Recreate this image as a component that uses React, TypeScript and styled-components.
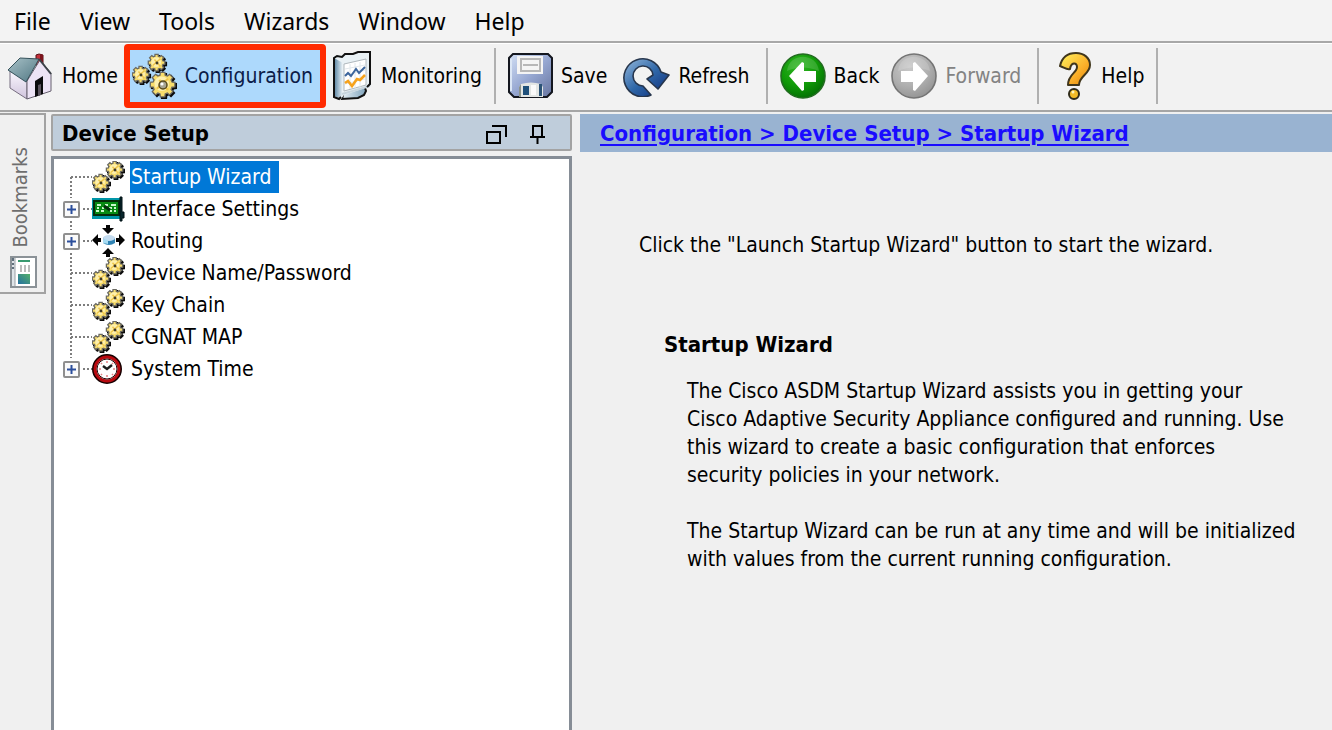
import React from "react";
import styled, { createGlobalStyle } from "styled-components";

const GlobalStyle = createGlobalStyle`
  *, *::before, *::after { box-sizing: border-box; }
  body {
    margin: 0;
    background: #f0f0f0;
    color: #000;
    font-family: "DejaVu Sans Condensed", Tahoma, sans-serif;
    font-size: 21px;
  }
  button { font: inherit; color: inherit; background: none; border: 0; padding: 0; cursor: default; }
  svg { display: block; flex: none; }
`;

const Page = styled.div`
  min-height: 100vh;
  display: flex;
  flex-direction: column;
`;

/* ---------- menu ---------- */

const MenuBar = styled.nav`
  display: flex;
  gap: 29px;
  height: 43px;
  padding: 0 14px;
  background: #f3f3f3;
  border-bottom: 2px solid #a8a8a8;
`;

const MenuItem = styled.button`
  font-family: "Noto Sans", "Segoe UI", sans-serif;
  font-size: 23px;
  line-height: 40px;
`;

/* ---------- toolbar ---------- */

const Toolbar = styled.div`
  display: flex;
  align-items: center;
  height: 69px;
  padding-bottom: 2px;
  background: #f2f2f2;
  border-top: 1px solid #fff;
  border-bottom: 2px solid #a5a5a5;
`;

const ToolButton = styled.button<{ $active?: boolean; $before?: number; $after?: number }>`
  display: flex;
  align-items: center;
  gap: 8px;
  height: 64px;
  padding: 0 ${(p) => p.$after ?? 6}px 0 ${(p) => p.$before ?? 6}px;
  line-height: 28px;
  white-space: nowrap;
  ${(p) =>
    p.$active &&
    `
    padding: 0 7px 0 2px;
    color: #0c1c48;
    background: #add9fc;
    border: 6px solid #ff2a00;
    border-radius: 4px;
  `}
  &:disabled { color: #838383; }
`;

const Separator = styled.div`
  width: 2px;
  height: 56px;
  margin: 0 6px;
  background: #b0b0b0;
`;

/* ---------- body ---------- */

const Body = styled.div`
  flex: 1;
  display: flex;
`;

const Rail = styled.aside`
  width: 51px;
  flex: none;
  padding-top: 1px;
`;

const BookmarksTab = styled.button`
  display: flex;
  flex-direction: column;
  align-items: flex-start;
  justify-content: flex-end;
  gap: 8px;
  width: 46px;
  height: 181px;
  padding: 0 0 4px 10px;
  border: 2px solid #a3a3a3;
  border-left: 0;
  background: #f0f0f0;
  color: #6e6e6e;
`;

const VerticalLabel = styled.span`
  writing-mode: vertical-rl;
  transform: rotate(180deg);
  font-size: 20px;
  line-height: 20px;
`;

const Sidebar = styled.section`
  width: 521px;
  flex: none;
  display: flex;
  flex-direction: column;
  gap: 5px;
  padding-top: 2px;
`;

const SidebarHeader = styled.header`
  display: flex;
  align-items: center;
  height: 37px;
  padding: 3px 25px 0 9px;
  background: #bfcddb;
  border: 2px solid #a3a3a3;
  border-radius: 2px;
`;

const SidebarTitle = styled.h2`
  flex: 1;
  margin: 0;
  font-size: 22px;
  line-height: 32px;
  font-weight: 700;
`;

const HeaderActions = styled.div`
  display: flex;
  gap: 23px;
`;

const Tree = styled.ul`
  flex: 1;
  margin: 0;
  padding: 2px 0 0 4px;
  list-style: none;
  background: #fff;
  border: 3px solid #868d96;
  border-bottom: 0;
`;

const TreeRow = styled.li`
  display: flex;
  align-items: center;
  height: 32px;
`;

const Branch = styled.span`
  width: 34px;
  height: 32px;
`;

const TreeIcon = styled.span`
  width: 38px;
`;

const TreeLabel = styled.button<{ $selected?: boolean }>`
  height: 32px;
  padding: 0 8px 0 1px;
  line-height: 32px;
  white-space: nowrap;
  ${(p) => p.$selected && `color: #fff; background: #0078d7;`}
`;

const Main = styled.main`
  flex: 1;
  min-width: 0;
  padding: 2px 0 0 8px;
`;

const Crumbs = styled.div`
  height: 38px;
  padding-left: 20px;
  background: #99b3d1;
  font-size: 22px;
  font-weight: 700;
  line-height: 40px;
`;

const CrumbLink = styled.a`
  color: #1a0cff;
  text-decoration: underline;
  text-decoration-thickness: 2px;
  text-underline-offset: 3px;
`;

const Lead = styled.p`
  margin: 79px 0 0 59px;
  line-height: 28px;
`;

const Article = styled.article`
  margin: 72px 0 0;
  padding: 0 16px 0 84px;
`;

const ArticleTitle = styled.h1`
  margin: 0 0 18px;
  font-size: 22px;
  line-height: 28px;
`;

const Paragraph = styled.p`
  margin: 0 0 28px 23px;
  line-height: 28px;
`;

/* ---------- icons ---------- */

const HomeIcon = () => (
  <svg width="46" height="48" viewBox="0 0 46 48" aria-hidden="true">
    <defs>
      <linearGradient id="wall" x1="0" y1="0" x2="0" y2="1">
        <stop offset="0" stopColor="#fbf8ff" />
        <stop offset="1" stopColor="#cfc3dc" />
      </linearGradient>
      <linearGradient id="roof" x1="0" y1="0" x2="1" y2="1">
        <stop offset="0" stopColor="#a9c2c8" />
        <stop offset="1" stopColor="#4f7682" />
      </linearGradient>
    </defs>
    <path d="M28 3l3-1 4 1v14l-7-4z" fill="#c4303a" stroke="#571016" />
    <path d="M32 2v12l3 3V3z" fill="#7d141c" />
    <path d="M2 19v17l17 11V28z" fill="url(#wall)" stroke="#776e80" />
    <path d="M19 47l24-8V21L32 8 19 29z" fill="#ece3f5" stroke="#66606e" />
    <path d="M27 29l8-5v18l-8 3z" fill="#0b0b0d" />
    <path d="M30 33l3-1v11l-3 1z" fill="#5b545f" />
    <path d="M0 18L12 6l19 1-13 23z" fill="url(#roof)" stroke="#35525b" />
    <path d="M31 7l12 15" stroke="#3c4248" strokeWidth="2" />
  </svg>
);

type GearProps = { cx: number; cy: number; r: number; teeth?: number };

const Gear = ({ cx, cy, r, teeth = 8 }: GearProps) => {
  const outline = (offset: number) => {
    const points: string[] = [];
    for (let i = 0; i < teeth; i++) {
      const step = (Math.PI * 2) / teeth;
      [
        [-0.34, r * 0.78],
        [-0.24, r],
        [0.24, r],
        [0.34, r * 0.78],
      ].forEach(([t, d]) => {
        const a = i * step + t * step;
        points.push(`${(cx + offset + Math.cos(a) * d).toFixed(1)},${(cy + offset + Math.sin(a) * d).toFixed(1)}`);
      });
    }
    return points.join(" ");
  };
  return (
    <g>
      <polygon points={outline(1)} fill="#0c0c0c" stroke="#0c0c0c" strokeWidth="1.6" />
      <polygon points={outline(-0.4)} fill="#f8dd6c" stroke="#6b6a62" strokeWidth="1.3" />
      <circle cx={cx - r * 0.1} cy={cy - r * 0.1} r={r * 0.58} fill="#fdf0ae" />
      <path
        d={`M${cx - r * 0.5} ${cy + r * 0.3}L${cx + r * 0.4} ${cy - r * 0.5}M${cx - r * 0.3} ${cy - r * 0.4}L${cx + r * 0.4} ${cy + r * 0.4}`}
        stroke="#f0c64a"
        strokeWidth={r * 0.18}
      />
      <circle cx={cx} cy={cy} r={r * 0.17} fill="#3f3a2a" />
    </g>
  );
};

const ConfigurationIcon = () => (
  <svg width="45" height="46" viewBox="0 0 45 46" aria-hidden="true">
    <Gear cx={25} cy={10} r={8.5} />
    <Gear cx={9} cy={22} r={8.5} />
    <Gear cx={31} cy={32} r={12.5} />
    <circle cx="31" cy="32" r="4" fill="#a8a594" stroke="#5a4a1c" strokeWidth="1.5" />
    <circle cx="30" cy="31" r="1.6" fill="#fff" />
  </svg>
);

const GearsIcon = () => (
  <svg width="33" height="32" viewBox="0 0 33 32" aria-hidden="true">
    <Gear cx={23} cy={9} r={8.3} />
    <Gear cx={9} cy={22} r={8.3} />
  </svg>
);

const MonitoringIcon = () => (
  <svg width="41" height="50" viewBox="0 0 41 50" aria-hidden="true">
    <defs>
      <linearGradient id="side" x1="0" y1="0" x2="1" y2="0">
        <stop offset="0" stopColor="#54809f" />
        <stop offset="1" stopColor="#f2f8fb" />
      </linearGradient>
      <linearGradient id="stand" x1="0" y1="0" x2="1" y2="0">
        <stop offset="0" stopColor="#e6f0f6" />
        <stop offset="1" stopColor="#7fa3bb" />
      </linearGradient>
    </defs>
    <path d="M12 40l20-6 2 6-2 4-6 3-16 1z" fill="url(#stand)" stroke="#111" strokeWidth="2" />
    <path d="M1 5l11-1 3-2 10 0 4-1h10v34l-27 9-3 4-8-2z" fill="#e9f1f5" />
    <path d="M2 7l9 5v31l-3 4-6-2z" fill="url(#side)" />
    <path d="M10 43l28-8" stroke="#c7d5de" strokeWidth="2" />
    <path
      d="M9 46l-2 2-5-2V7l3-2 5 1 3-3 8 0 5-2h12v32l-3 3"
      fill="none"
      stroke="#111"
      strokeWidth="2"
    />
    <path d="M12 13l22-5v26l-22 6z" fill="#fff" stroke="#b0b8bd" />
    <path d="M13 18l20-4M13 24l20-5M13 33l20-5M18 13v25M23 12v25M28 11v25" stroke="#e2e8ec" />
    <path d="M13 25l3-3 3 3 5-7 3 4 6-6" fill="none" stroke="#3c659c" strokeWidth="2" />
    <path d="M13 32l3-2 4 5 5-7 3 1 5-5" fill="none" stroke="#f6a21c" strokeWidth="2.6" />
  </svg>
);

const SaveIcon = () => (
  <svg width="45" height="46" viewBox="0 0 45 46" aria-hidden="true">
    <defs>
      <linearGradient id="disk" x1="0" y1="0" x2="1" y2="1">
        <stop offset="0" stopColor="#d3e0f5" />
        <stop offset="0.5" stopColor="#97a8d2" />
        <stop offset="1" stopColor="#66749f" />
      </linearGradient>
    </defs>
    <path d="M5 1h35l4 4v34l-5 5H6l-5-5V5z" fill="url(#disk)" stroke="#14171f" strokeWidth="2" />
    <path d="M3 6v32" stroke="#dbe6f5" strokeWidth="2" />
    <path d="M9 3h26v18H9z" fill="#f4f4f4" />
    <path d="M13 6h19v12H13zM15 12h15" fill="none" stroke="#b7b7b7" strokeWidth="2" />
    <path d="M13 31q10-3 20 0l2 3v10H11V34z" fill="#e3e6e4" />
    <path d="M11 34l2-3v13h-2z" fill="#8b938d" />
    <path d="M15 33h6v9h-6z" fill="#1f507a" />
    <path d="M31 31h3v12h-3z" fill="#2b5376" />
    <path d="M23 32h5v10h-5z" fill="#fafafa" />
  </svg>
);

const RefreshIcon = () => (
  <svg width="47" height="42" viewBox="0 0 47 42" aria-hidden="true">
    <defs>
      <linearGradient id="swirl" x1="0" y1="0" x2="1" y2="1">
        <stop offset="0" stopColor="#94b8dc" />
        <stop offset="0.5" stopColor="#2f67a8" />
        <stop offset="1" stopColor="#0a2878" />
      </linearGradient>
    </defs>
    <path
      d="M28 40A19 19 0 1 1 38 17L46 20 35 34 24 24 30 20A10 10 0 1 0 20 31z"
      fill="url(#swirl)"
      stroke="#27364d"
      strokeWidth="1.6"
      strokeLinejoin="round"
    />
  </svg>
);

const ArrowIcon = ({ enabled }: { enabled: boolean }) => {
  const id = enabled ? "back" : "forward";
  return (
    <svg width="46" height="48" viewBox="0 0 46 48" aria-hidden="true">
      <defs>
        <radialGradient id={id} cx="0.4" cy="0.3" r="0.7">
          <stop offset="0" stopColor={enabled ? "#2fb522" : "#c9c9c9"} />
          <stop offset="0.6" stopColor={enabled ? "#109a08" : "#b0b0b0"} />
          <stop offset="1" stopColor={enabled ? "#047304" : "#969696"} />
        </radialGradient>
      </defs>
      <circle cx="23" cy="24" r="22" fill={`url(#${id})`} stroke={enabled ? "#226c20" : "#747474"} strokeWidth="1.6" />
      <path d="M7 19C9 0 37 0 39 19Q22 12 7 19z" fill="#fff" opacity="0.15" />
      <path
        d={enabled ? "M9 24L22 10l2 1v8h12v11H24v8l-2 1z" : "M37 24L24 10l-2 1v8H10v11h12v8l2 1z"}
        fill="#fff"
      />
    </svg>
  );
};

const HelpIcon = () => (
  <svg width="34" height="49" viewBox="0 0 34 49" aria-hidden="true">
    <defs>
      <linearGradient id="question" x1="0" y1="0" x2="1" y2="1">
        <stop offset="0" stopColor="#fff45e" />
        <stop offset="0.6" stopColor="#fbb02a" />
        <stop offset="1" stopColor="#e08408" />
      </linearGradient>
    </defs>
    <path
      d="M1 14C3 5 9 1 17 1s14 5 14 12c0 9-11 11-11 20H9c0-11 9-12 9-18 0-5-6-5-7 2-3 1-5-1-10-3z"
      fill="url(#question)"
      stroke="#40361c"
      strokeWidth="2"
      strokeLinejoin="round"
    />
    <circle cx="15" cy="42" r="5" fill="#f3bb26" stroke="#2f2a18" strokeWidth="2" />
    <circle cx="14" cy="40" r="1.5" fill="#fff6b8" />
  </svg>
);

const InterfaceIcon = () => (
  <svg width="33" height="26" viewBox="0 0 33 26" aria-hidden="true">
    <path d="M0 2h28v21H0z" fill="#0096a8" />
    <path d="M2 5h25v14H2z" fill="#078a12" stroke="#052d0a" strokeWidth="2" />
    <path d="M28 1h2v15h2v6h-2v3h-2z" fill="#08262c" stroke="#001015" />
    <path d="M5 9h4M13 9h3M19 9h5M5 12h2M10 12h2M17 12h3M22 12h2M4 15h3M9 15h3M18 15h2M22 15h2" stroke="#c9f7cb" strokeWidth="2" />
    <path d="M12 10l6 4" stroke="#032f0b" strokeWidth="3" />
  </svg>
);

const RoutingIcon = () => (
  <svg width="33" height="32" viewBox="0 0 33 32" aria-hidden="true">
    <path d="M0 15l6-6v4h3v4H6v4zM33 15l-6-6v4h-3v4h3v4zM10 3h4V0h4v3h4l-6 6zM10 29h4v3h4v-3h4l-6-6z" fill="#050505" />
    <path d="M11 13q5-4 12 0v5q-6 4-12 0z" fill="#2e83b4" />
    <ellipse cx="17" cy="13" rx="6" ry="3" fill="#c4dcf0" />
    <path d="M11 14v4l5 1v-4z" fill="#a8dcf2" />
  </svg>
);

const ClockIcon = () => (
  <svg width="30" height="30" viewBox="0 0 30 30" aria-hidden="true">
    <circle cx="15" cy="15" r="13" fill="#fff" stroke="#150000" strokeWidth="4" />
    <circle cx="15" cy="15" r="12" fill="none" stroke="#b80a10" strokeWidth="3" />
    <circle cx="15" cy="15" r="10" fill="#fff" stroke="#200506" strokeWidth="1" />
    <path d="M15 7v2M15 21v2M7 15h2M21 15h2M9 9l1 1M20 20l1 1M9 21l1-1M20 10l1-1" stroke="#e58589" strokeWidth="1.6" />
    <path d="M11 12l4 3 5-4" fill="none" stroke="#1c1c1c" strokeWidth="2.4" />
  </svg>
);

const BookmarkPageIcon = () => (
  <svg width="27" height="32" viewBox="0 0 27 32" aria-hidden="true">
    <defs>
      <linearGradient id="thumb" x1="1" y1="0" x2="0" y2="1">
        <stop offset="0" stopColor="#55b06a" />
        <stop offset="1" stopColor="#2470a0" />
      </linearGradient>
    </defs>
    <path d="M1 1h25v30H1z" fill="#fff" stroke="#8b9297" strokeWidth="2" />
    <path d="M2 2h3v28H2z" fill="#dfe4e8" />
    <path d="M3 2v3M3 7v2M3 11v2" stroke="#60707c" strokeWidth="2" />
    <path d="M5 2v28" stroke="#9aa1a6" />
    <path d="M8 5h12" stroke="#3a9a70" strokeWidth="2" />
    <path d="M11 9v7M15 9v7M19 9v7" stroke="#bcbcbc" strokeWidth="2" />
    <path d="M8 18h12v10H8z" fill="url(#thumb)" />
  </svg>
);

const FloatIcon = () => (
  <svg width="21" height="19" viewBox="0 0 21 19" aria-hidden="true">
    <path d="M1 7h13v11H1zM6 1h14v11" fill="none" stroke="#000" strokeWidth="2" />
  </svg>
);

const PinIcon = () => (
  <svg width="15" height="19" viewBox="0 0 15 19" aria-hidden="true">
    <path d="M3 12V1h9v11M0 12h15M7.5 12v7" fill="none" stroke="#000" strokeWidth="2" />
  </svg>
);

type BranchProps = { expandable?: boolean; first?: boolean; last?: boolean };

const BranchLines = ({ expandable, first, last }: BranchProps) => (
  <svg width="37" height="32" viewBox="0 0 37 32" aria-hidden="true">
    <path
      d={`M13 ${first ? 16 : 0}V${last ? 16 : 32}M13 16H34`}
      fill="none"
      stroke="#7d7d7d"
      strokeWidth="2"
      strokeDasharray="2 2"
    />
    {expandable && (
      <>
        <path d="M3 5h20v22H3z" fill="#fff" />
        <rect x="6" y="9" width="15" height="15" rx="1" fill="#fafafa" stroke="#8f8f8f" strokeWidth="2" />
        <path d="M9 16.5h9M13.5 12v9" stroke="#2c4f9c" strokeWidth="2" />
      </>
    )}
  </svg>
);

/* ---------- data ---------- */

const menus = ["File", "View", "Tools", "Wizards", "Window", "Help"];

const nodes = [
  { label: "Startup Wizard", icon: <GearsIcon />, selected: true },
  { label: "Interface Settings", icon: <InterfaceIcon />, expandable: true },
  { label: "Routing", icon: <RoutingIcon />, expandable: true },
  { label: "Device Name/Password", icon: <GearsIcon /> },
  { label: "Key Chain", icon: <GearsIcon /> },
  { label: "CGNAT MAP", icon: <GearsIcon /> },
  { label: "System Time", icon: <ClockIcon />, expandable: true },
];

export default function App() {
  return (
    <Page>
      <GlobalStyle />
      <MenuBar>
        {menus.map((m) => (
          <MenuItem key={m}>{m}</MenuItem>
        ))}
      </MenuBar>

      <Toolbar>
        <ToolButton $before={8}><HomeIcon />Home</ToolButton>
        <ToolButton $active><ConfigurationIcon />Configuration</ToolButton>
        <ToolButton><MonitoringIcon />Monitoring</ToolButton>
        <Separator />
        <ToolButton><SaveIcon />Save</ToolButton>
        <ToolButton $before={10} $after={10}><RefreshIcon />Refresh</ToolButton>
        <Separator />
        <ToolButton><ArrowIcon enabled />Back</ToolButton>
        <ToolButton $after={10} disabled><ArrowIcon enabled={false} />Forward</ToolButton>
        <Separator />
        <ToolButton $before={14}><HelpIcon />Help</ToolButton>
        <Separator />
      </Toolbar>

      <Body>
        <Rail>
          <BookmarksTab>
            <VerticalLabel>Bookmarks</VerticalLabel>
            <BookmarkPageIcon />
          </BookmarksTab>
        </Rail>

        <Sidebar>
          <SidebarHeader>
            <SidebarTitle>Device Setup</SidebarTitle>
            <HeaderActions>
              <button aria-label="Float panel"><FloatIcon /></button>
              <button aria-label="Pin panel"><PinIcon /></button>
            </HeaderActions>
          </SidebarHeader>
          <Tree>
            {nodes.map((n, i) => (
              <TreeRow key={n.label}>
                <Branch>
                  <BranchLines expandable={n.expandable} first={i === 0} last={i === nodes.length - 1} />
                </Branch>
                <TreeIcon>{n.icon}</TreeIcon>
                <TreeLabel $selected={n.selected}>{n.label}</TreeLabel>
              </TreeRow>
            ))}
          </Tree>
        </Sidebar>

        <Main>
          <Crumbs>
            <CrumbLink href="#startup-wizard">Configuration &gt; Device Setup &gt; Startup Wizard</CrumbLink>
          </Crumbs>
          <Lead>Click the "Launch Startup Wizard" button to start the wizard.</Lead>
          <Article>
            <ArticleTitle>Startup Wizard</ArticleTitle>
            <Paragraph>
              The Cisco ASDM Startup Wizard assists you in getting your<br />
              Cisco Adaptive Security Appliance configured and running. Use<br />
              this wizard to create a basic configuration that enforces<br />
              security policies in your network.
            </Paragraph>
            <Paragraph>
              The Startup Wizard can be run at any time and will be initialized<br />
              with values from the current running configuration.
            </Paragraph>
          </Article>
        </Main>
      </Body>
    </Page>
  );
}
